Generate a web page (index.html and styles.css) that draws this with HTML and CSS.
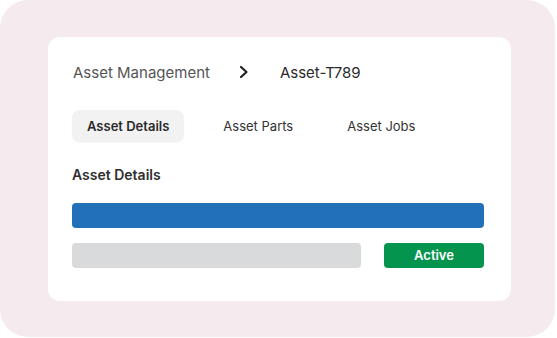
FILE: index.html
```html
<!DOCTYPE html>
<html>
<head>
    <title>Asset-T789</title>
    <link rel="stylesheet" href="styles.css">
</head>
<body>
    <div class="frame">
        <div class="card">
            <div class="crumbs">
                <span class="crumb">Asset Management</span>
                <svg class="chevron" width="12" height="14" viewBox="0 0 12 14">
                    <path d="M3 2 L8.5 7 L3 12" fill="none" stroke="#222" stroke-width="2.2" stroke-linecap="round" stroke-linejoin="round"/>
                </svg>
                <span class="crumb current">Asset-T789</span>
            </div>
            <div class="tabs">
                <div class="tab active">Asset Details</div>
                <div class="tab">Asset Parts</div>
                <div class="tab">Asset Jobs</div>
            </div>
            <h2 class="section-title">Asset Details</h2>
            <div class="bar bar-blue"></div>
            <div class="row">
                <div class="bar bar-gray"></div>
                <div class="status">Active</div>
            </div>
        </div>
    </div>
</body>
</html>
```

FILE: styles.css
```css
body {
    margin: 0;
    background: #fff;
    font-family: Inter, "Liberation Sans", sans-serif;
}
.frame {
    box-sizing: border-box;
    width: 555px;
    height: 337px;
    background: #f5ebee;
    border-radius: 28px;
    padding: 37px 44px 37px 48px;
}
.card {
    box-sizing: border-box;
    height: 264px;
    background: #fff;
    border-radius: 12px;
    padding: 25px 27px 0 24px;
}
.crumbs {
    display: flex;
    align-items: center;
    height: 20px;
    font-size: 15px;
    color: #555;
}
.crumb {
    margin-left: 1px;
}
.chevron {
    margin: 0 29px 0 28px;
}
.crumb.current {
    color: #2a2a2a;
}
.tabs {
    display: flex;
    gap: 24px;
    margin-top: 28px;
    height: 32px;
    align-items: center;
}
.tab {
    font-size: 13px;
    font-weight: 400;
    color: #333;
    padding: 0 15px;
    height: 32px;
    line-height: 32px;
}
.tab.active {
    background: #f2f2f2;
    border-radius: 8px;
    color: #2a2a2a;
    font-weight: 600;
    box-shadow: 0 1px 2px rgba(0, 0, 0, 0.04);
}
.section-title {
    margin: 24px 0 0;
    font-size: 14px;
    font-weight: 600;
    color: #2e2e2e;
    height: 18px;
    line-height: 18px;
}
.bar {
    border-radius: 4px;
    height: 25px;
}
.bar-blue {
    margin-top: 19px;
    background: #2271b8;
}
.row {
    display: flex;
    margin-top: 15px;
}
.bar-gray {
    width: 289px;
    background: #d9dadc;
}
.status {
    margin-left: auto;
    width: 100px;
    height: 25px;
    line-height: 25px;
    text-align: center;
    background: #04944d;
    color: #fff;
    font-size: 13px;
    font-weight: 600;
    border-radius: 4px;
}
```
